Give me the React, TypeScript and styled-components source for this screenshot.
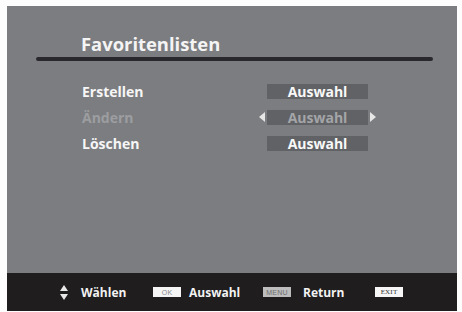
import styled, { createGlobalStyle } from 'styled-components';

const GlobalStyle = createGlobalStyle`
  body {
    margin: 0;
    background: #fdfdfd;
    font-family: "Open Sans", "DejaVu Sans", sans-serif;
  }
`;

const Screen = styled.div`
  margin: 6px 0 0 7px;
  width: 450px;
  height: 305px;
  background: #7c7d80;
  display: flex;
  flex-direction: column;
`;

const Content = styled.div`
  flex: 1;
  padding-top: 25px;
`;

const Title = styled.h1`
  margin: 0 0 0 74px;
  font-size: 18.4px;
  line-height: 26px;
  font-weight: 700;
  color: #f4f4f4;
`;

const Divider = styled.div`
  margin: 0 24px 0 29px;
  height: 4px;
  border-radius: 2px;
  background: #29292d;
`;

const Rows = styled.div`
  margin-top: 17px;
  padding-left: 75px;
  display: flex;
  flex-direction: column;
`;

const Row = styled.div<{ $dim?: boolean }>`
  height: 26px;
  display: flex;
  align-items: center;
  font-size: 14px;
  font-weight: 700;
  color: ${p => (p.$dim ? '#9c9da0' : '#f6f6f6')};
`;

const Label = styled.span`
  width: 177px;
`;

const ArrowSlot = styled.span<{ $side: 'left' | 'right' }>`
  width: 8px;
  display: flex;
  justify-content: ${p => (p.$side === 'left' ? 'flex-start' : 'flex-end')};
`;

const ValueBox = styled.span<{ $dim?: boolean }>`
  width: 101px;
  height: 15px;
  background: #616265;
  display: flex;
  align-items: center;
  justify-content: center;
  line-height: 15px;
  color: ${p => (p.$dim ? '#a4a5a8' : '#f8f8f8')};
`;

const Footer = styled.div`
  height: 38px;
  background: #1f1d1e;
  display: flex;
  align-items: center;
  padding-left: 53px;
  font-size: 12px;
  font-weight: 700;
  color: #f2f2f2;
`;

const Hint = styled.div<{ $width?: number; $gap: number }>`
  width: ${p => (p.$width ? `${p.$width}px` : 'auto')};
  display: flex;
  align-items: center;
  gap: ${p => p.$gap}px;
`;

const Key = styled.span<{ $bg: string; $fg: string; $serif?: boolean }>`
  width: 28px;
  height: 10px;
  background: ${p => p.$bg};
  color: ${p => p.$fg};
  display: flex;
  align-items: center;
  justify-content: center;
  font-size: 7px;
  font-weight: 400;
  font-family: ${p => (p.$serif ? '"Liberation Serif", serif' : '"Liberation Sans", sans-serif')};
  letter-spacing: 0.2px;
`;

const Tri = ({ dir }: { dir: 'left' | 'right' }) => (
  <svg width="6" height="10" viewBox="0 0 6 10">
    <path d={dir === 'left' ? 'M6 0 L0 5 L6 10 Z' : 'M0 0 L6 5 L0 10 Z'} fill="#e6e6e6" />
  </svg>
);

const UpDown = () => (
  <svg width="8" height="15" viewBox="0 0 8 15">
    <path d="M4 0 L8 6 L0 6 Z" fill="#e8e8e8" />
    <path d="M0 9 L8 9 L4 15 Z" fill="#e8e8e8" />
  </svg>
);

const items = [
  { label: 'Erstellen', dim: false },
  { label: 'Ändern', dim: true },
  { label: 'Löschen', dim: false },
];

export default function App() {
  return (
    <>
      <GlobalStyle />
      <Screen>
        <Content>
          <Title>Favoritenlisten</Title>
          <Divider />
          <Rows>
            {items.map(it => (
              <Row key={it.label} $dim={it.dim}>
                <Label>{it.label}</Label>
                <ArrowSlot $side="left">{it.dim && <Tri dir="left" />}</ArrowSlot>
                <ValueBox $dim={it.dim}>Auswahl</ValueBox>
                <ArrowSlot $side="right">{it.dim && <Tri dir="right" />}</ArrowSlot>
              </Row>
            ))}
          </Rows>
        </Content>
        <Footer>
          <Hint $width={93} $gap={13}>
            <UpDown />
            <span>Wählen</span>
          </Hint>
          <Hint $width={110} $gap={8}>
            <Key $bg="#f4f4f4" $fg="#8a8a8a">OK</Key>
            <span>Auswahl</span>
          </Hint>
          <Hint $width={112} $gap={12}>
            <Key $bg="#bdbdbd" $fg="#6e6e6e">MENU</Key>
            <span>Return</span>
          </Hint>
          <Hint $gap={0}>
            <Key $bg="#f6f6f6" $fg="#333" $serif>EXIT</Key>
          </Hint>
        </Footer>
      </Screen>
    </>
  );
}
